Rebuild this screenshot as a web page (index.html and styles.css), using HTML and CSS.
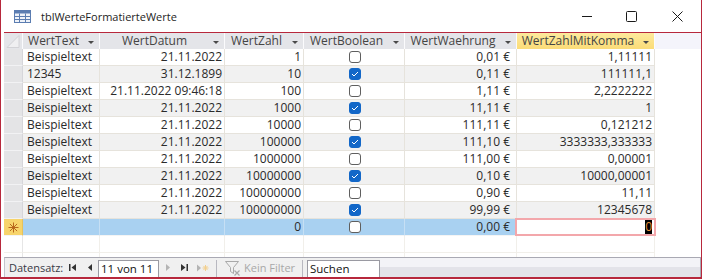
FILE: index.html
```html
<!DOCTYPE html>
<html lang="de">
<head>
<meta charset="utf-8">
<title>tblWerteFormatierteWerte</title>
<link rel="stylesheet" href="styles.css">
</head>
<body>
<div class="window">
  <div class="titlebar">
    <svg class="ticon" width="17" height="13" viewBox="0 0 17 13">
      <rect x="0.5" y="0.5" width="16" height="12" fill="#eef2f8" stroke="#5b7db1"/>
      <rect x="0.5" y="0.5" width="16" height="3" fill="#5b7db1"/>
      <path d="M0.5 6.5H16.5M0.5 9.5H16.5M5.5 3.5V12.5M11.5 3.5V12.5" stroke="#5b7db1" stroke-width="1"/>
    </svg>
    <span class="title">tblWerteFormatierteWerte</span>
    <div class="controls">
      <svg class="ctl-min" width="10" height="10" viewBox="0 0 10 10"><path d="M0 5.5H10" stroke="#1a1a1a"/></svg>
      <svg class="ctl-max" width="11" height="11" viewBox="0 0 11 11"><rect x="0.5" y="0.5" width="10" height="10" rx="1" fill="none" stroke="#1a1a1a"/></svg>
      <svg class="ctl-close" width="11" height="11" viewBox="0 0 11 11"><path d="M0.5 0.5L10.5 10.5M10.5 0.5L0.5 10.5" stroke="#1a1a1a"/></svg>
    </div>
  </div>
  <div class="doc">
    <div class="grid">
      <div class="row head">
        <div class="cell sel corner"><svg width="18" height="16" viewBox="0 0 18 16"><path d="M3 14.5L15 2.5V14.5Z" fill="#efeff1" stroke="#d2d2d6" stroke-width="1"/></svg></div>
        <div class="cell c1 hd"><span class="lbl">WertText</span><span class="arr"></span></div>
        <div class="cell c2 hd"><span class="lbl">WertDatum</span><span class="arr"></span></div>
        <div class="cell c3 hd"><span class="lbl">WertZahl</span><span class="arr"></span></div>
        <div class="cell c4 hd"><span class="lbl">WertBoolean</span><span class="arr"></span></div>
        <div class="cell c5 hd"><span class="lbl">WertWaehrung</span><span class="arr"></span></div>
        <div class="cell c6 hd active"><span class="lbl">WertZahlMitKomma</span><span class="arr"></span></div>
        <div class="fill"></div>
      </div>

      <div class="row">
        <div class="cell sel"></div>
        <div class="cell c1">Beispieltext</div><div class="cell c2 r">21.11.2022</div><div class="cell c3 r">1</div>
        <div class="cell c4 ctr"><span class="cb"></span></div>
        <div class="cell c5 r cur">0,01 €</div><div class="cell c6 r">1,11111</div><div class="fill"></div>
      </div>
      <div class="row alt">
        <div class="cell sel"></div>
        <div class="cell c1">12345</div><div class="cell c2 r">31.12.1899</div><div class="cell c3 r">10</div>
        <div class="cell c4 ctr"><span class="cb on"><svg width="8" height="6" viewBox="0 0 8 6"><path d="M1 3L3 5L7 1" fill="none" stroke="#fff" stroke-width="1"/></svg></span></div>
        <div class="cell c5 r cur">0,11 €</div><div class="cell c6 r">111111,1</div><div class="fill"></div>
      </div>
      <div class="row">
        <div class="cell sel"></div>
        <div class="cell c1">Beispieltext</div><div class="cell c2 r">21.11.2022 09:46:18</div><div class="cell c3 r">100</div>
        <div class="cell c4 ctr"><span class="cb"></span></div>
        <div class="cell c5 r cur">1,11 €</div><div class="cell c6 r">2,2222222</div><div class="fill"></div>
      </div>
      <div class="row alt">
        <div class="cell sel"></div>
        <div class="cell c1">Beispieltext</div><div class="cell c2 r">21.11.2022</div><div class="cell c3 r">1000</div>
        <div class="cell c4 ctr"><span class="cb on"><svg width="8" height="6" viewBox="0 0 8 6"><path d="M1 3L3 5L7 1" fill="none" stroke="#fff" stroke-width="1"/></svg></span></div>
        <div class="cell c5 r cur">11,11 €</div><div class="cell c6 r">1</div><div class="fill"></div>
      </div>
      <div class="row">
        <div class="cell sel"></div>
        <div class="cell c1">Beispieltext</div><div class="cell c2 r">21.11.2022</div><div class="cell c3 r">10000</div>
        <div class="cell c4 ctr"><span class="cb"></span></div>
        <div class="cell c5 r cur">111,11 €</div><div class="cell c6 r">0,121212</div><div class="fill"></div>
      </div>
      <div class="row alt">
        <div class="cell sel"></div>
        <div class="cell c1">Beispieltext</div><div class="cell c2 r">21.11.2022</div><div class="cell c3 r">100000</div>
        <div class="cell c4 ctr"><span class="cb on"><svg width="8" height="6" viewBox="0 0 8 6"><path d="M1 3L3 5L7 1" fill="none" stroke="#fff" stroke-width="1"/></svg></span></div>
        <div class="cell c5 r cur">111,10 €</div><div class="cell c6 r">3333333,333333</div><div class="fill"></div>
      </div>
      <div class="row">
        <div class="cell sel"></div>
        <div class="cell c1">Beispieltext</div><div class="cell c2 r">21.11.2022</div><div class="cell c3 r">1000000</div>
        <div class="cell c4 ctr"><span class="cb"></span></div>
        <div class="cell c5 r cur">111,00 €</div><div class="cell c6 r">0,00001</div><div class="fill"></div>
      </div>
      <div class="row alt">
        <div class="cell sel"></div>
        <div class="cell c1">Beispieltext</div><div class="cell c2 r">21.11.2022</div><div class="cell c3 r">10000000</div>
        <div class="cell c4 ctr"><span class="cb on"><svg width="8" height="6" viewBox="0 0 8 6"><path d="M1 3L3 5L7 1" fill="none" stroke="#fff" stroke-width="1"/></svg></span></div>
        <div class="cell c5 r cur">0,10 €</div><div class="cell c6 r">10000,00001</div><div class="fill"></div>
      </div>
      <div class="row">
        <div class="cell sel"></div>
        <div class="cell c1">Beispieltext</div><div class="cell c2 r">21.11.2022</div><div class="cell c3 r">100000000</div>
        <div class="cell c4 ctr"><span class="cb"></span></div>
        <div class="cell c5 r cur">0,90 €</div><div class="cell c6 r">11,11</div><div class="fill"></div>
      </div>
      <div class="row alt">
        <div class="cell sel"></div>
        <div class="cell c1">Beispieltext</div><div class="cell c2 r">21.11.2022</div><div class="cell c3 r">100000000</div>
        <div class="cell c4 ctr"><span class="cb on"><svg width="8" height="6" viewBox="0 0 8 6"><path d="M1 3L3 5L7 1" fill="none" stroke="#fff" stroke-width="1"/></svg></span></div>
        <div class="cell c5 r cur">99,99 €</div><div class="cell c6 r">12345678</div><div class="fill"></div>
      </div>

      <div class="row newrow">
        <div class="cell sel star"><svg width="11" height="11" viewBox="0 0 11 11"><path d="M5.5 0.5V10.5M0.5 5.5H10.5M1.9 1.9L9.1 9.1M9.1 1.9L1.9 9.1" stroke="#b8661c" stroke-width="1"/></svg></div>
        <div class="cell c1"></div><div class="cell c2"></div><div class="cell c3 r">0</div>
        <div class="cell c4 ctr"><span class="cb"></span></div>
        <div class="cell c5 r cur">0,00 €</div>
        <div class="cell c6 r editing"><span class="selzero">0</span></div>
        <div class="fill"></div>
      </div>

      <div class="row empty">
        <div class="cell sel"></div><div class="cell c1"></div><div class="cell c2"></div><div class="cell c3"></div><div class="cell c4"></div><div class="cell c5"></div><div class="cell c6"></div><div class="fill"></div>
      </div>
      <div class="row empty">
        <div class="cell sel"></div><div class="cell c1"></div><div class="cell c2"></div><div class="cell c3"></div><div class="cell c4"></div><div class="cell c5"></div><div class="cell c6"></div><div class="fill"></div>
      </div>
    </div>

    <div class="nav">
      <span class="navlbl">Datensatz:</span>
      <span class="nbtn b-first"><svg width="7" height="7" viewBox="0 0 7 7"><rect x="0" y="0" width="1.5" height="7" fill="#333"/><path d="M7 0V7L2.5 3.5Z" fill="#333"/></svg></span>
      <span class="nbtn b-prev"><svg width="4" height="7" viewBox="0 0 4 7"><path d="M4 0V7L0 3.5Z" fill="#333"/></svg></span>
      <span class="navbox rec">11 von 11</span>
      <span class="nbtn b-next"><svg width="4" height="7" viewBox="0 0 4 7"><path d="M0 0V7L4 3.5Z" fill="#b4b4b4"/></svg></span>
      <span class="nbtn b-last"><svg width="7" height="7" viewBox="0 0 7 7"><path d="M0 0V7L4.5 3.5Z" fill="#333"/><rect x="5.5" y="0" width="1.5" height="7" fill="#333"/></svg></span>
      <span class="nbtn b-new"><svg width="12" height="8" viewBox="0 0 12 8"><path d="M0 0.5V7.5L4 4Z" fill="#b4b4b4"/><path d="M8.5 1V7M5.5 4H11.5M6.4 1.9L10.6 6.1M10.6 1.9L6.4 6.1" stroke="#f3cf8c" stroke-width="1"/></svg></span>
      <span class="nsep"></span>
      <span class="filter"><svg width="16" height="15" viewBox="0 0 16 15"><path d="M0.5 0.5H13.5L8.5 6.5V12.5L5.5 10.5V6.5Z" fill="none" stroke="#a9a9a9"/><path d="M9.5 9.5L14.5 14.5M14.5 9.5L9.5 14.5" stroke="#a9a9a9" stroke-width="1.2"/></svg><span class="ftext">Kein Filter</span></span>
      <span class="nsep"></span>
      <span class="navbox search">Suchen</span>
      <span class="hscroll"></span>
    </div>
  </div>
</div>
</body>
</html>
```

FILE: styles.css
```css
* { box-sizing: border-box; }

body {
  margin: 0;
  background: #fff;
  font-family: "Open Sans", "Noto Sans", sans-serif;
}

.window {
  width: 702px;
  height: 279px;
  border-left: 1px solid #b7283c;
  border-right: 1px solid #b7283c;
  border-bottom: 2px solid #b7283c;
  display: flex;
  flex-direction: column;
  background: #fff;
}

/* title bar */
.titlebar {
  height: 32px;
  flex: none;
  display: flex;
  align-items: center;
}
.ticon { margin-left: 13px; flex: none; }
.title {
  margin-left: 10px;
  font-size: 11px;
  color: #1e1e1e;
}
.controls {
  margin-left: auto;
  margin-right: 18px;
  display: flex;
  align-items: center;
}
.ctl-max { margin-left: 34px; }
.ctl-close { margin-left: 35px; }

/* document */
.doc {
  flex: 1;
  margin-left: 3px;
  border-top: 1px solid #b7283c;
  display: flex;
  flex-direction: column;
}

.grid {
  height: 224px;
  overflow: hidden;
  flex: none;
}

.row {
  display: flex;
  height: 17px;
  font-size: 12px;
  color: #2a2a2a;
  line-height: 16px;
}

.cell {
  flex: none;
  height: 17px;
  border-right: 1px solid #e6e3dc;
  border-bottom: 1px solid #e6e3dc;
  padding: 0 2px 0 4px;
  white-space: nowrap;
  overflow: hidden;
}
.cell.r { text-align: right; }
.cell.cur { padding-right: 6px; }
.cell.ctr {
  display: flex;
  align-items: center;
  justify-content: center;
}

.sel {
  width: 19px;
  padding: 0;
  background: #e4e4e6;
  border-right: 1px solid #d6d6da;
  border-bottom: 1px solid #f2f2f4;
}
.c1 { width: 77px; }
.c2 { width: 125px; }
.c3 { width: 79px; }
.c4 { width: 101px; }
.c5 { width: 112px; }
.c6 { width: 138px; }
.fill { flex: 1; }

.alt .cell { background: #f1f1f1; }
.alt .cell.sel { background: #e4e4e6; }

/* header */
.head { height: 16px; background: #f4f4fb; color: #444; }
.head .cell {
  height: 16px;
  border-bottom: none;
  border-right: 1px solid #fbfbfd;
  background: #e4e5e9;
  display: flex;
  align-items: center;
  padding: 0;
}
.head .corner { display: block; }
.head .corner svg { display: block; }
.hd .lbl {
  flex: 1;
  text-align: center;
  padding-left: 2px;
}
.hd .arr {
  width: 17px;
  flex: none;
  display: flex;
  justify-content: center;
  align-items: center;
  height: 16px;
  padding-top: 2px;
}
.hd .arr::before {
  content: "";
  border-left: 3px solid transparent;
  border-right: 3px solid transparent;
  border-top: 3px solid #4a4a4a;
}
.head .active { background: linear-gradient(#fde99c, #fbdc78); }

/* checkboxes */
.cb {
  width: 12px;
  height: 12px;
  border: 1px solid #5f5f5f;
  border-radius: 3px;
  background: #fff;
  display: flex;
  align-items: center;
  justify-content: center;
}
.cb.on {
  background: #1267c8;
  border-color: #1267c8;
}

/* new record row */
.newrow .cell {
  background: #a9d1f1;
  border-right: 1px solid #c6dff4;
  border-bottom: 1px solid #f4f4f4;
}
.newrow .sel.star {
  background: #f7d46b;
  display: flex;
  align-items: center;
  justify-content: center;
  border-right: 1px solid #e8c25a;
}
.newrow .editing {
  background: #fff;
  position: relative;
  overflow: visible;
}
.newrow .editing::after {
  content: "";
  position: absolute;
  left: -2px;
  right: -2px;
  top: -1px;
  bottom: -1px;
  border: 2px solid #f3a7ab;
}
.selzero {
  background: #000;
  color: #e8913a;
  display: inline-block;
  line-height: 16px;
  padding: 0 0;
}

/* empty rows */
.empty .cell {
  background: #fff;
  border-right: 1px solid #f1efea;
  border-bottom: 1px solid #f1efea;
}
.empty .sel { border-right: 1px solid #e6e6e6; }

/* navigation bar */
.nav {
  height: 20px;
  flex: none;
  display: flex;
  align-items: flex-start;
  background: #f0f0f0;
  border-top: 1px solid #a9a9b3;
  border-left: 1px solid #c4c4cc;
  font-size: 11px;
  color: #3a3a46;
}
.navlbl {
  width: 59px;
  padding-left: 4px;
  line-height: 18px;
  margin-top: 1px;
}
.nbtn {
  height: 19px;
  display: flex;
  align-items: center;
  justify-content: center;
  flex: none;
}
.b-first { width: 17px; }
.b-prev { width: 17px; }
.b-next { width: 17px; }
.b-last { width: 17px; }
.b-new { width: 20px; }
.navbox {
  margin-top: 2px;
  height: 17px;
  background: #fff;
  border: 1px solid #9a9aa2;
  border-bottom: none;
  padding-left: 2px;
  line-height: 15px;
  font-size: 11.5px;
  color: #111;
  flex: none;
}
.rec { width: 61px; }
.nsep {
  width: 1px;
  height: 17px;
  margin: 2px 3px 0 3px;
  background: #b8b8c0;
  flex: none;
}
.filter {
  display: flex;
  align-items: center;
  height: 19px;
  width: 79px;
  padding-left: 5px;
  color: #a8a8a8;
  flex: none;
}
.filter svg { margin-top: 2px; }
.ftext { margin-left: 3px; }
.search { width: 73px; margin-left: 1px; }
.hscroll {
  flex: 1;
  height: 19px;
  margin-top: 0;
  background: linear-gradient(#f3f3f7 0, #f3f3f7 9px, #e3e3e9 9px);
  border-right: 1px solid #a9a9b3;
}
```
